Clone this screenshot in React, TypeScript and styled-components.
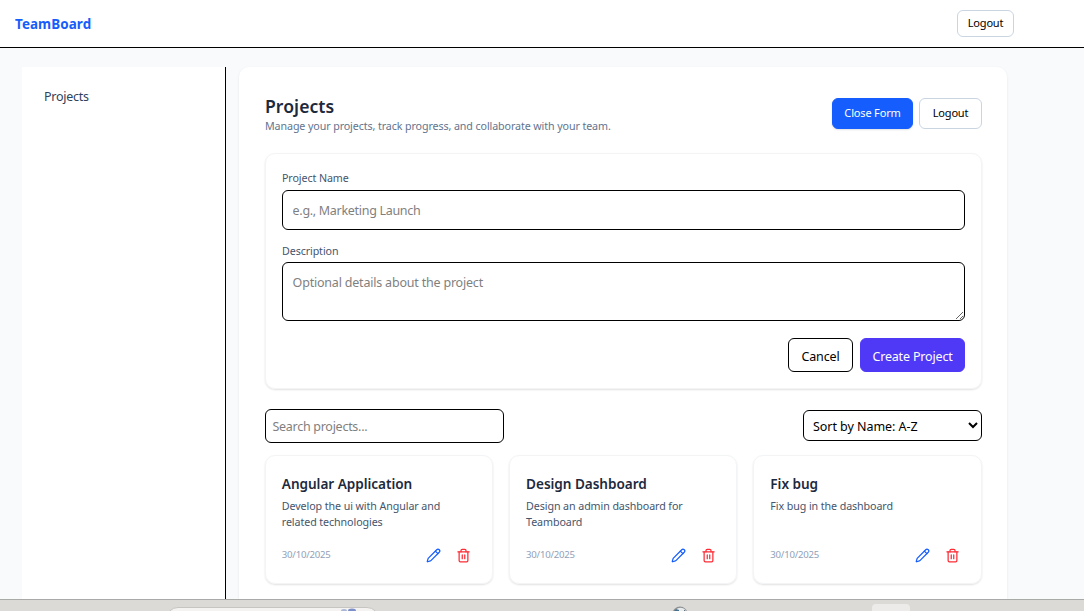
import React from 'react';
import styled, { createGlobalStyle } from 'styled-components';
import { Pencil, Trash2 } from 'lucide-react';

const GlobalStyle = createGlobalStyle`
  *, *::before, *::after { box-sizing: border-box; }
  body { margin: 0; overflow: hidden; }
  h1, h2, p { margin: 0; }
  body, button, input, textarea, select {
    font-family: "Segoe UI", "Noto Sans", sans-serif;
  }
`;

const Screen = styled.div`
  display: flex;
  flex-direction: column;
  height: 611px;
  background: #f8fafc;
  color: #1d293d;
`;

const TopBar = styled.header`
  flex: none;
  display: flex;
  align-items: center;
  justify-content: space-between;
  height: 48px;
  padding: 0 70px 0 15px;
  background: #fff;
  border-bottom: 1px solid #000;
`;

const Brand = styled.div`
  padding-top: 1px;
  font-size: 13.4px;
  font-weight: 700;
  line-height: 20px;
  letter-spacing: 0.1px;
  color: #155dfc;
`;

const Button = styled.button<{ $w: number; $h: number; $kind?: 'blue' | 'indigo' | 'dark'; $large?: boolean }>`
  width: ${(p) => p.$w}px;
  height: ${(p) => p.$h}px;
  padding: ${(p) => (p.$large ? '2px 0 0' : '0 0 2px')};
  border-radius: 6px;
  white-space: nowrap;
  font-size: ${(p) => (p.$large ? 12.5 : 11)}px;
  letter-spacing: -0.17px;
  border: 1px solid
    ${(p) => (p.$kind === 'blue' ? '#155dfc' : p.$kind === 'indigo' ? '#4f39f6' : p.$kind === 'dark' ? '#000' : '#cad5e2')};
  background: ${(p) => (p.$kind === 'blue' ? '#155dfc' : p.$kind === 'indigo' ? '#4f39f6' : '#fff')};
  color: ${(p) => (p.$kind === 'blue' || p.$kind === 'indigo' ? '#fff' : '#000')};
  box-shadow: ${(p) => (p.$kind === 'blue' ? '0 1px 2px rgba(0, 0, 0, 0.12)' : 'none')};
`;

const Body = styled.div`
  flex: 1;
  min-height: 0;
  display: flex;
  gap: 13px;
  padding: 19px 77px 0 22px;
`;

const Sidebar = styled.nav`
  flex: none;
  width: 204px;
  padding: 20px 22px;
  background: #fff;
  border-right: 1px solid #000;
`;

const NavLink = styled.div`
  font-size: 12.5px;
  line-height: 20px;
  letter-spacing: -0.25px;
  color: #314158;
`;

const Panel = styled.main`
  flex: 1;
  min-width: 0;
  padding: 27px 25px 0 26px;
  background: #fff;
  border-radius: 10px 10px 0 0;
  box-shadow: 0 1px 3px rgba(0, 0, 0, 0.08);
`;

const PanelHead = styled.div`
  display: flex;
  justify-content: space-between;
  height: 59px;
`;

const Title = styled.h1`
  font-size: 17.6px;
  font-weight: 600;
  line-height: 24px;
  letter-spacing: 0.05px;
`;

const Subtitle = styled.p`
  font-size: 10.7px;
  line-height: 16px;
  letter-spacing: -0.1px;
  color: #62748e;
`;

const Actions = styled.div<{ $top: number; $gap: number }>`
  display: flex;
  justify-content: flex-end;
  gap: ${(p) => p.$gap}px;
  padding-top: ${(p) => p.$top}px;
`;

const FormCard = styled.form`
  height: 236px;
  padding: 16px 16px 0;
  border: 1px solid #f3f4f6;
  border-radius: 10px;
  box-shadow: 0 1px 2px rgba(0, 0, 0, 0.12);
`;

const Label = styled.label`
  display: block;
  font-size: 10.7px;
  line-height: 16px;
  letter-spacing: -0.1px;
  color: #45556c;
`;

const Field = styled.input`
  display: block;
  width: 100%;
  height: 40px;
  margin: 4px 0 13px;
  padding: 0 9.6px;
  border: 1px solid #000;
  border-radius: 6px;
  outline: none;
  font-size: 12.5px;
  letter-spacing: -0.3px;
  &::placeholder { color: #7f7f7f; }
`;

const Area = styled.textarea`
  display: block;
  width: 100%;
  height: 59px;
  margin-top: 3px;
  padding: 10px 9.6px;
  border: 1px solid #000;
  border-radius: 6px;
  outline: none;
  font-size: 12.5px;
  line-height: 19px;
  letter-spacing: -0.2px;
  &::placeholder { color: #7f7f7f; }
`;

const Filters = styled.div`
  display: flex;
  justify-content: space-between;
  align-items: flex-start;
  height: 34px;
  margin: 20px 0 12.4px;
`;

const Search = styled.input`
  width: 239px;
  height: 34px;
  padding: 0 7px 0 6.4px;
  border: 1px solid #000;
  border-radius: 6px;
  font-size: 12.5px;
  letter-spacing: -0.27px;
  &::placeholder { color: #7f7f7f; }
`;

const Sort = styled.select`
  width: 179px;
  height: 31px;
  margin-top: 1px;
  padding: 1px 0 0 5px;
  border: 1px solid #000;
  border-radius: 6px;
  background: #fff;
  color: #000;
  font-size: 12.5px;
  letter-spacing: -0.05px;
`;

const Grid = styled.section`
  display: grid;
  grid-template-columns: repeat(3, 1fr);
  gap: 16px;
  margin: 0 0.4px 0 -0.2px;
`;

const Card = styled.article`
  display: flex;
  flex-direction: column;
  height: 128.6px;
  padding: 17.6px 16px 16px;
  border: 1px solid #f3f4f6;
  border-radius: 10px;
  box-shadow: 0 1px 2px rgba(0, 0, 0, 0.12);
`;

const CardTitle = styled.h2`
  font-size: 13.6px;
  font-weight: 600;
  line-height: 20px;
  letter-spacing: -0.05px;
`;

const CardText = styled.p`
  margin-top: 4px;
  height: 32px;
  font-size: 10.7px;
  line-height: 16px;
  letter-spacing: -0.09px;
  color: #45556c;
`;

const CardFoot = styled.div`
  display: flex;
  align-items: center;
  justify-content: space-between;
  margin-top: 14px;
  height: 24px;
`;

const DateText = styled.span`
  padding-bottom: 2px;
  font-size: 9.6px;
  letter-spacing: -0.23px;
  color: #90a1b9;
`;

const IconRow = styled.div`
  display: flex;
  gap: 15px;
  padding-right: 4.6px;
`;

const Taskbar = styled.footer`
  flex: none;
  display: flex;
  align-items: flex-start;
  height: 12px;
  padding-left: 166px;
  background: #dbdad7;
  border-top: 1px solid #a9aaa8;
  overflow: hidden;
`;

const TaskSearch = styled.div`
  display: flex;
  justify-content: flex-end;
  flex: none;
  width: 213px;
  height: 30px;
  margin-top: 7px;
  padding: 0 20px 0 0;
  background: #f4f3f1;
  border: 1px solid #c6c5c2;
  border-radius: 12px;
`;

const TaskGlobe = styled.svg`
  flex: none;
  margin: 6px 0 0 293px;
`;

const TaskWindow = styled.div`
  flex: none;
  width: 38px;
  height: 20px;
  margin: 4px 0 0 184px;
  background: #ecebe9;
  border-radius: 4px;
`;

const projects = [
  { name: 'Angular Application', text: 'Develop the ui with Angular and related technologies', date: '30/10/2025' },
  { name: 'Design Dashboard', text: 'Design an admin dashboard for Teamboard', date: '30/10/2025' },
  { name: 'Fix bug', text: 'Fix bug in the dashboard', date: '30/10/2025' },
];

export default function App() {
  return (
    <Screen>
      <GlobalStyle />
      <TopBar>
        <Brand>TeamBoard</Brand>
        <Button $w={57} $h={27}>Logout</Button>
      </TopBar>
      <Body>
        <Sidebar>
          <NavLink>Projects</NavLink>
        </Sidebar>
        <Panel>
          <PanelHead>
            <div>
              <Title>Projects</Title>
              <Subtitle>Manage your projects, track progress, and collaborate with your team.</Subtitle>
            </div>
            <Actions $top={4} $gap={6}>
              <Button $w={81} $h={31} $kind="blue">Close Form</Button>
              <Button $w={63} $h={31}>Logout</Button>
            </Actions>
          </PanelHead>
          <FormCard>
            <Label>Project Name</Label>
            <Field placeholder="e.g., Marketing Launch" />
            <Label>Description</Label>
            <Area placeholder="Optional details about the project" />
            <Actions $top={17} $gap={7}>
              <Button type="button" $w={65} $h={34} $kind="dark" $large>Cancel</Button>
              <Button type="button" $w={105} $h={34} $kind="indigo" $large>Create Project</Button>
            </Actions>
          </FormCard>
          <Filters>
            <Search placeholder="Search projects..." />
            <Sort>
              <option>Sort by Name: A-Z</option>
            </Sort>
          </Filters>
          <Grid>
            {projects.map((p) => (
              <Card key={p.name}>
                <CardTitle>{p.name}</CardTitle>
                <CardText>{p.text}</CardText>
                <CardFoot>
                  <DateText>{p.date}</DateText>
                  <IconRow>
                    <Pencil size={15} color="#155dfc" />
                    <Trash2 size={15} color="#fb2c36" />
                  </IconRow>
                </CardFoot>
              </Card>
            ))}
          </Grid>
        </Panel>
      </Body>
      <Taskbar>
        <TaskSearch>
          <svg width="18" height="6" viewBox="0 0 18 6">
            <ellipse cx="4" cy="3" rx="3" ry="2" fill="#a9b6d6" />
            <ellipse cx="12" cy="3" rx="4" ry="2.4" fill="#7d8fc9" />
          </svg>
        </TaskSearch>
        <TaskGlobe width="16" height="12" viewBox="0 0 16 12">
          <circle cx="8" cy="8" r="7.5" fill="#8f9193" />
          <circle cx="8.5" cy="8.5" r="6.8" fill="#e6ebee" />
          <path d="M1 6L4 3L7 4L7 9H1Z" fill="#46708c" />
          <path d="M12 4L14 5L15 8H12Z" fill="#3f4a52" />
        </TaskGlobe>
        <TaskWindow />
      </Taskbar>
    </Screen>
  );
}
